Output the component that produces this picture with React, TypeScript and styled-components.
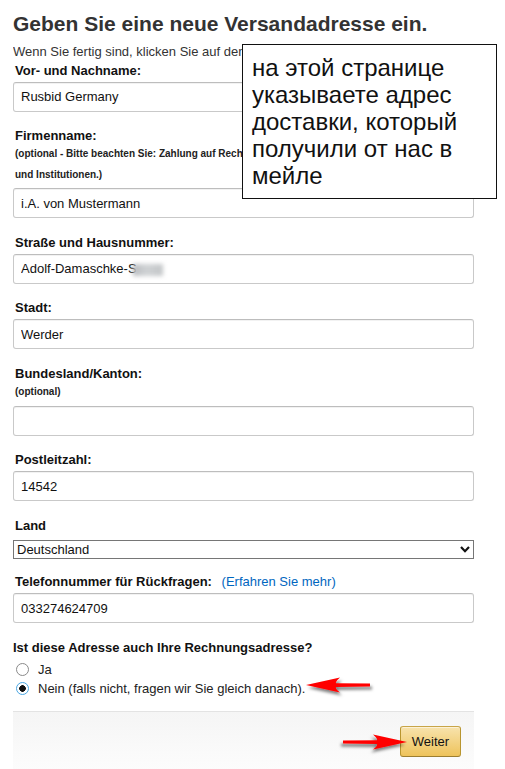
import styled, { createGlobalStyle } from 'styled-components';

const GlobalStyle = createGlobalStyle`
	html, body {
		margin: 0;
		padding: 0;
		background: #fff;
	}

	body {
		font-family: "Liberation Sans", Arial, sans-serif;
		color: #111;
		overflow: hidden;
	}
`;

const Page = styled.div`
	position: relative;
	width: 461px;
	margin-left: 13px;
	padding-top: 12px;
`;

const Title = styled.h1`
	margin: 0;
	font-size: 21px;
	line-height: 24px;
	font-weight: 700;
	color: #333;
`;

// text that runs under the note box is cut where the box starts
const Intro = styled.p`
	width: 229px;
	margin: 8px 0 0;
	overflow: hidden;
	font-size: 13px;
	line-height: 16px;
	color: #333;
	white-space: nowrap;
`;

const FieldRow = styled.div<{ $gap?: number }>`
	display: flex;
	flex-direction: column;
	margin-top: ${(props) => props.$gap ?? 16.5}px;
`;

const Label = styled.label`
	display: block;
	padding-left: 2px;
	font-size: 13px;
	line-height: 16px;
	font-weight: 700;
	color: #111;
	white-space: nowrap;
`;

const Hint = styled.div`
	width: 227px;
	overflow: hidden;
	padding-left: 2px;
	font-size: 10px;
	line-height: 20.7px;
	font-weight: 700;
	color: #222;
	white-space: nowrap;
`;

const HelpLink = styled.a`
	margin-left: 6px;
	font-weight: 400;
	color: #0066c0;
	text-decoration: none;
`;

const InputWrap = styled.div`
	position: relative;
	margin-top: 3px;
`;

const TextInput = styled.input`
	display: block;
	box-sizing: border-box;
	width: 100%;
	height: 30px;
	padding: 0 7px;
	border: 1px solid #c9c9c9;
	border-top-color: #bdbdbd;
	border-radius: 3px;
	box-shadow: inset 0 1px 0 rgba(0, 0, 0, 0.05);
	font-family: "Liberation Sans", Arial, sans-serif;
	font-size: 13px;
	color: #111;
	background: #fff;
	outline: none;
`;

// the censored part of the street address
const Blur = styled.span`
	position: absolute;
	left: 120px;
	top: 10px;
	width: 30px;
	height: 12px;
	background: linear-gradient(to right, #b9bcbf, #cfd2d4 45%, #c3c6c8);
	filter: blur(2px);
	pointer-events: none;
`;

const SelectWrap = styled.div`
	position: relative;
	margin-top: 6px;
`;

const Select = styled.select`
	display: block;
	box-sizing: border-box;
	width: 100%;
	height: 19px;
	padding: 0 0 0 3px;
	border: 1px solid #767676;
	border-radius: 0;
	appearance: none;
	background: #fff;
	font-family: "Liberation Sans", Arial, sans-serif;
	font-size: 13px;
	color: #111;
	outline: none;
`;

const Chevron = styled.svg`
	position: absolute;
	right: 4px;
	top: 6px;
	pointer-events: none;
`;

const Question = styled.div`
	margin-top: 16.5px;
	font-size: 13px;
	line-height: 16px;
	font-weight: 700;
	color: #111;
`;

const RadioList = styled.div`
	display: flex;
	flex-direction: column;
	margin-top: 4px;
`;

const RadioRow = styled.label`
	display: flex;
	align-items: center;
	gap: 9px;
	height: 19px;
	padding-left: 3px;
	font-size: 13px;
	color: #222;
`;

const Radio = styled.input`
	appearance: none;
	box-sizing: border-box;
	width: 13px;
	height: 13px;
	margin: 0;
	border: 1px solid #8a8a8a;
	border-radius: 50%;
	background: #fff;

	&:checked {
		border: 1px solid #49a6e3;
		background: radial-gradient(circle, #111 0 3px, #fff 3.6px);
	}
`;

const ActionBar = styled.div`
	display: flex;
	justify-content: flex-end;
	margin-top: 13px;
	padding: 14px 13px 40px;
	border-top: 1px solid #e3e3e3;
	background: linear-gradient(to bottom, #f5f5f5, #fafafa 40px, #fff);
`;

const Button = styled.button`
	box-sizing: border-box;
	width: 61px;
	height: 31px;
	border: 1px solid #a88734;
	border-color: #c8a548 #b8952f #9c7e31;
	border-radius: 3px;
	background: linear-gradient(to bottom, #f8e3ad, #eec35b);
	box-shadow: inset 0 1px 0 rgba(255, 255, 255, 0.5);
	font-family: "Liberation Sans", Arial, sans-serif;
	font-size: 13px;
	color: #111;
	cursor: pointer;
`;

const Callout = styled.div`
	position: absolute;
	left: 229px;
	top: 44px;
	box-sizing: border-box;
	width: 255px;
	height: 155px;
	padding: 9px 9px 0;
	border: 1px solid #111;
	background: #fff;
	font-family: "Liberation Sans", Arial, sans-serif;
	font-size: 24px;
	line-height: 27px;
	color: #111;
`;

const ArrowSvg = styled.svg<{ $x: number, $y: number }>`
	position: absolute;
	left: ${(props) => props.$x}px;
	top: ${(props) => props.$y}px;
	overflow: visible;
	pointer-events: none;
`;

type ArrowProps = {
	x: number,
	y: number,
	flip?: boolean,
};

const Arrow = ({ x, y, flip }: ArrowProps) => (
	<ArrowSvg $x={x} $y={y} width="66" height="18" viewBox="0 0 66 18">
		<defs>
			<filter id={`shade-${x}`} x="-20%" y="-50%" width="150%" height="220%">
				<feDropShadow dx="2" dy="3" stdDeviation="1.6" floodColor="#000" floodOpacity="0.5" />
			</filter>
		</defs>
		<g transform={flip ? 'translate(66 0) scale(-1 1)' : undefined} filter={`url(#shade-${x})`}>
			<path
				d="M0 9 L34 1.5 Q29 6 30 7.2 L64 7.6 L64 10.6 L30 11 Q29 12.5 34 16.5 Z"
				fill="#f00"
			/>
		</g>
	</ArrowSvg>
);

type FieldProps = {
	label: string,
	value?: string,
	hints?: string[],
	gap?: number,
	blur?: boolean,
};

const Field = ({ label, value = '', hints, gap, blur }: FieldProps) => (
	<FieldRow $gap={gap}>
		<Label>{label}</Label>
		{hints && hints.map((hint) => <Hint key={hint}>{hint}</Hint>)}
		<InputWrap>
			<TextInput defaultValue={value} />
			{blur && <Blur />}
		</InputWrap>
	</FieldRow>
);

const App = () => {
	return (
		<>
			<GlobalStyle />
			<Page>
				<Title>Geben Sie eine neue Versandadresse ein.</Title>
				<Intro>Wenn Sie fertig sind, klicken Sie auf den „Weiter“-Button.</Intro>

				<Field label="Vor- und Nachname:" value="Rusbid Germany" gap={2.5} />
				<Field
					label="Firmenname:"
					value="i.A. von Mustermann"
					hints={[
						'(optional - Bitte beachten  Sie: Zahlung auf Rechnung nur für Firmen, Behörden',
						'und Institutionen.)',
					]}
				/>
				<Field label="Straße und Hausnummer:" value="Adolf-Damaschke-S" blur />
				<Field label="Stadt:" value="Werder" />
				<Field label="Bundesland/Kanton:" hints={['(optional)']} />
				<Field label="Postleitzahl:" value="14542" />

				<FieldRow>
					<Label>Land</Label>
					<SelectWrap>
						<Select defaultValue="DE">
							<option value="DE">Deutschland</option>
							<option value="AT">Österreich</option>
							<option value="CH">Schweiz</option>
						</Select>
						<Chevron width="10" height="7" viewBox="0 0 10 7">
							<polyline points="1,1 5,5.2 9,1" fill="none" stroke="#111" strokeWidth="2.2" />
						</Chevron>
					</SelectWrap>
				</FieldRow>

				<FieldRow $gap={15.5}>
					<Label>
						Telefonnummer für Rückfragen:
						<HelpLink href="#"> (Erfahren Sie mehr)</HelpLink>
					</Label>
					<InputWrap>
						<TextInput defaultValue="033274624709" />
					</InputWrap>
				</FieldRow>

				<Question>Ist diese Adresse auch Ihre Rechnungsadresse?</Question>
				<RadioList>
					<RadioRow>
						<Radio type="radio" name="billing" />
						Ja
					</RadioRow>
					<RadioRow>
						<Radio type="radio" name="billing" defaultChecked />
						Nein (falls nicht, fragen wir Sie gleich danach).
					</RadioRow>
				</RadioList>

				<ActionBar>
					<Button type="button">Weiter</Button>
				</ActionBar>

				<Callout>
					на этой странице указываете адрес доставки, который получили от нас в мейле
				</Callout>
				<Arrow x={293} y={676} />
				<Arrow x={328} y={733} flip />
			</Page>
		</>
	);
};

export default App;
